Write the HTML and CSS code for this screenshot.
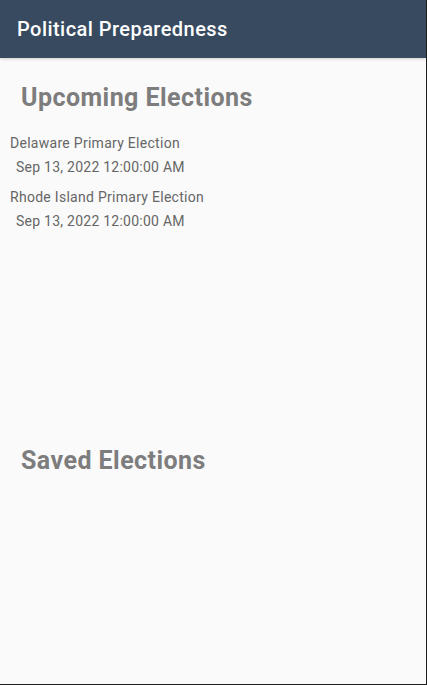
FILE: index.html
```html
<!DOCTYPE html>
<html>
<head>
<meta charset="utf-8">
<link rel="stylesheet" href="styles.css">
</head>
<body>
<div class="app">
  <header class="topbar">
    <h1 class="title">Political Preparedness</h1>
  </header>
  <main class="content">
    <section class="upcoming">
      <h2 class="heading">Upcoming Elections</h2>
      <ul class="list">
        <li class="item">
          <div class="name">Delaware Primary Election</div>
          <div class="date">Sep 13, 2022 12:00:00 AM</div>
        </li>
        <li class="item">
          <div class="name">Rhode Island Primary Election</div>
          <div class="date">Sep 13, 2022 12:00:00 AM</div>
        </li>
      </ul>
    </section>
    <section class="saved">
      <h2 class="heading">Saved Elections</h2>
    </section>
  </main>
</div>
</body>
</html>
```
FILE: styles.css
```css
html, body {
  margin: 0;
  padding: 0;
  background: #fafafa;
}
.app {
  width: 427px;
  height: 685px;
  box-sizing: border-box;
  border-right: 1px solid #1e1e1e;
  border-bottom: 1px solid #1e1e1e;
  background: #fafafa;
  display: flex;
  flex-direction: column;
  font-family: Roboto, "Noto Sans", sans-serif;
  overflow: hidden;
}
.topbar {
  height: 58px;
  flex: none;
  background: #374a5f;
  display: flex;
  align-items: center;
  padding-left: 17px;
  box-shadow: 0 1px 3px rgba(0,0,0,0.18);
  position: relative;
  z-index: 1;
}
.title {
  margin: 0;
  font-size: 20px;
  line-height: 24px;
  font-weight: 500;
  letter-spacing: 0.45px;
  color: #ffffff;
}
.content {
  flex: 1;
  padding-top: 26px;
}
.upcoming {
  height: 363px;
}
.heading {
  margin: 0;
  padding-left: 21px;
  font-size: 25px;
  line-height: 28px;
  font-weight: 700;
  letter-spacing: 0.45px;
  color: #7d7d7d;
}
.list {
  list-style: none;
  margin: 21px 0 0;
  padding: 0;
  display: flex;
  flex-direction: column;
  gap: 10px;
}
.item {
  display: flex;
  flex-direction: column;
  gap: 4px;
}
.name {
  padding-left: 10px;
  font-size: 14px;
  line-height: 20px;
  letter-spacing: 0.28px;
  color: #666666;
}
.date {
  padding-left: 16px;
  font-size: 14px;
  line-height: 20px;
  letter-spacing: 0.25px;
  color: #666666;
}
```
